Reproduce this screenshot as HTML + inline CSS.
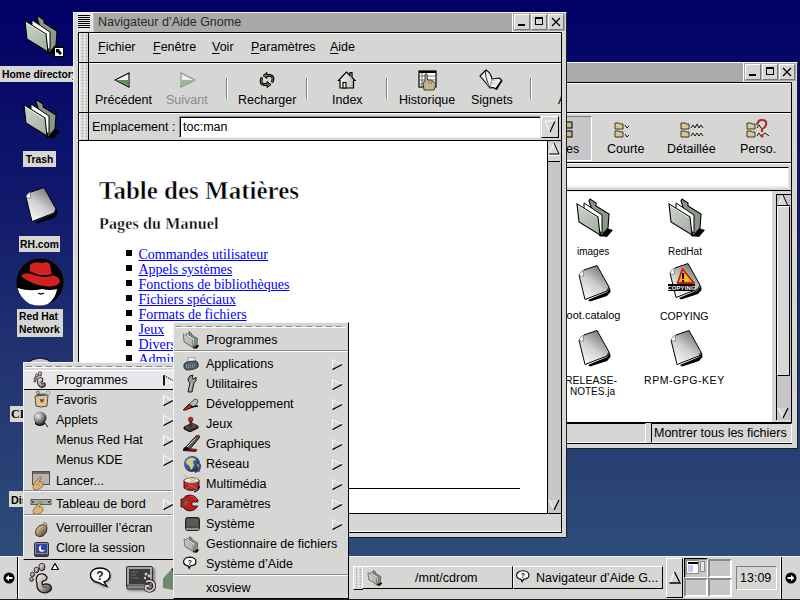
<!DOCTYPE html>
<html><head><meta charset="utf-8">
<style>
*{margin:0;padding:0;box-sizing:border-box}
html,body{width:800px;height:600px;overflow:hidden}
body{position:relative;font-family:"Liberation Sans",sans-serif;font-size:12.5px;color:#000;
background:linear-gradient(to bottom,#010166 0px,#030566 40px,#121a6c 210px,#203170 346px,#283f74 456px,#2c4b78 540px,#2d4e7a 600px)}
.a{position:absolute}
.t{position:absolute;white-space:nowrap;line-height:1}
.g{background:#d6d6d4}
.blk{background:#000}
.hdl{position:absolute;background-color:#e2e2e0;
 background-image:radial-gradient(circle at 1.5px 1.5px,#bcb4b4 0.9px,transparent 1.1px);
 background-size:4px 3px;background-position:1px 1px;border-right:1px solid #000;border-left:1px solid #fff}
.lbl{position:absolute;background:#d6d6d4;font-weight:bold;font-size:12px;line-height:14px;text-align:center;color:#000;white-space:nowrap}
.wbtn{position:absolute;width:16px;height:16px;background:#d6d6d4;border:1px solid;border-color:#fff #7a7a7a #7a7a7a #fff;box-shadow:0 0 0 1px #a8a8a8}
.tb{position:absolute;width:2px;background:#858585;border-right:1px solid #fff}
.mi{position:absolute;left:0;right:0;height:20px}
.mi .t{top:4px}
u{text-underline-offset:2px}
.arr{position:absolute;width:11px;height:11px}
</style></head><body>

<svg width="0" height="0" style="position:absolute">
 <defs>
  <linearGradient id="fgr" x1="0" y1="0" x2="1" y2="1"><stop offset="0" stop-color="#ccd6cc"/><stop offset="1" stop-color="#a0ae9e"/></linearGradient>
  <linearGradient id="dgr" x1="0.75" y1="0.1" x2="0.2" y2="0.95"><stop offset="0" stop-color="#7a7a7a"/><stop offset="0.5" stop-color="#cfcfcf"/><stop offset="1" stop-color="#f8f8f8"/></linearGradient>
  <symbol id="folder" viewBox="0 0 45 45">
   <path d="M27 41L31 32L41 35L35 42Z" fill="#000"/>
   <path d="M17 6L18 4L24 8L24 11L37 19L36 33L29 41Z" fill="#8a988a" stroke="#000" stroke-width="1.1"/>
   <path d="M12 8L30 20L30 38L12 26Z" fill="#fff" stroke="#000" stroke-width="1"/>
   <path d="M5 9L26 22L28 40L7 27Z" fill="url(#fgr)" stroke="#000" stroke-width="1.1"/>
   <path d="M6 10.5L25 22.5" stroke="#eef4ee" stroke-width="1"/>
  </symbol>
  <symbol id="doc" viewBox="0 0 45 45">
   <path d="M16 40L35 32L38 27L38.5 32L35 36L18 41.5Z" fill="#000"/>
   <path d="M7 15L12 10L25 5.5L37 27L35 31L13 39.5Z" fill="url(#dgr)" stroke="#000" stroke-width="1"/>
   <path d="M7 15Q8 11 12 10Q10 13 12 16Q9 17 7 15Z" fill="#fafafa" stroke="#555" stroke-width="0.6"/>
  </symbol>
 </defs>
</svg>
<!-- ============ DESKTOP ICONS ============ -->
<div id="desk">
 <svg class="a" style="left:20px;top:12px" width="45" height="45"><use href="#folder"/></svg>
 <div class="a" style="left:54px;top:47px;width:10px;height:10px;background:#fff;border:1px solid #000"></div>
 <svg class="a" style="left:55px;top:48px" width="8" height="8"><path d="M1 1H5L4 2L7 5L5 7L2 4L1 5Z" fill="#000"/></svg>
 <div class="lbl" style="left:0px;top:66px;width:80px;height:16px;font-size:10.3px;line-height:17px;text-align:left;padding-left:2px">Home directory</div>
 <svg class="a" style="left:19px;top:96px" width="45" height="45"><use href="#folder"/></svg>
 <div class="lbl" style="left:23px;top:151px;width:33px;height:16px;font-size:10.3px;line-height:17px">Trash</div>
 <svg class="a" style="left:19px;top:182px" width="45" height="45"><use href="#doc"/></svg>
 <div class="lbl" style="left:19px;top:236px;width:41px;height:16px;font-size:10.3px;line-height:17px">RH.com</div>
 <svg class="a" style="left:16px;top:258px" width="48" height="48" viewBox="0 0 48 48">
  <circle cx="24" cy="24" r="23.5" fill="#000"/>
  <path d="M1.5 30Q14 34 26 31Q34 33 41 31Q40 40 32 46Q24 49 14 46Q4 40 1.5 30Z" fill="#fff"/>
  <path d="M5 18Q8 14 14 16L14 7Q18 3 26 5Q33 3 34 7L36 17Q44 19 44 24Q40 30 28 28Q14 26 5 18Z" fill="#d42020"/>
  <path d="M14 14Q24 20 36 17" fill="none" stroke="#000" stroke-width="1.8"/>
  <path d="M22 35Q25 37 28 35" fill="none" stroke="#000" stroke-width="1.4"/>
 </svg>
 <div class="lbl" style="left:17px;top:309px;width:46px;height:28px;font-size:10.3px;line-height:12.5px;padding-top:2px;text-align:left;padding-left:2px">Red Hat<br>Network</div>
 <svg class="a" style="left:20px;top:352px" width="40" height="12" viewBox="0 0 40 12"><path d="M6 12Q20 0 34 12Z" fill="#c8c0d8"/><path d="M6 12Q20 0 34 12" fill="none" stroke="#000" stroke-width="1"/></svg>
 <div class="lbl" style="left:10px;top:406px;width:20px;height:16px;font-family:'Liberation Serif',serif;font-size:12px;line-height:17px;text-align:left;padding-left:1px">CD</div>
 <div class="lbl" style="left:9px;top:491px;width:20px;height:16px;font-size:10.8px;line-height:18px;text-align:left;padding-left:2px">Dis</div>
</div>

<!-- ============ GMC WINDOW (right) ============ -->
<div id="gmc">
 <div class="a" style="left:520px;top:62px;width:278px;height:387px;background:#d6d6d4;border-top:1px solid #f4f4f4;border-right:1px solid #202020;border-bottom:1px solid #202020"></div>
 <div class="a" style="left:540px;top:63px;width:203px;height:19px;background:#aaaaa8"></div>
 <div class="a" style="left:743px;top:63px;width:53px;height:19px;background:#dcdcdc;border-left:1px solid #fff"></div>
 <div class="wbtn" style="left:745px;top:64px"></div>
 <div class="a blk" style="left:749px;top:74px;width:7px;height:2px"></div>
 <div class="wbtn" style="left:762px;top:64px"></div>
 <div class="a" style="left:766px;top:67px;width:8px;height:8px;border:1px solid #000;border-top-width:2px"></div>
 <div class="wbtn" style="left:779px;top:64px"></div>
 <svg class="a" style="left:782px;top:67px" width="10" height="10"><path d="M1 1L9 9M9 1L1 9" stroke="#000" stroke-width="1.3"/></svg>
 <!-- inner -->
 <div class="a blk" style="left:530px;top:82px;width:262px;height:109px"></div>
 <div class="a g" style="left:531px;top:83px;width:260px;height:29px;border-top:1px solid #fff"></div>
 <div class="a g" style="left:531px;top:113px;width:260px;height:49px;border-top:1px solid #fff"></div>
 <div class="a" style="left:540px;top:116px;width:52px;height:45px;background:#c8c6c8;border:1px solid;border-color:#7a7a7a #fff #fff #7a7a7a"></div>
 <svg class="a" style="left:566px;top:121px" width="10" height="18"><rect x="0" y="1" width="6" height="6" fill="#c8b888" stroke="#000" stroke-width="1"/><rect x="0" y="10" width="6" height="6" fill="#c8b888" stroke="#000" stroke-width="1"/></svg>
 <div class="t" style="left:566px;top:143px">es</div>
 <svg class="a" style="left:614px;top:121px" width="18" height="18"><path d="M1 2H5L6 3H9V8H1Z" fill="#d8c898" stroke="#302818" stroke-width="0.9"/><path d="M1 10H5L6 11H9V16H1Z" fill="#d8c898" stroke="#302818" stroke-width="0.9"/><path d="M11 4L13 7L15 5M11 13L13 16L15 14" fill="none" stroke="#000" stroke-width="0.9"/></svg>
 <div class="t" style="left:607px;top:143px">Courte</div>
 <svg class="a" style="left:680px;top:120px" width="24" height="19"><path d="M1 3H5L6 4H9V9H1Z" fill="#d8c898" stroke="#302818" stroke-width="0.9"/><path d="M1 11H5L6 12H9V17H1Z" fill="#d8c898" stroke="#302818" stroke-width="0.9"/><path d="M11 8L13 5L15 8L17 4L19 8L21 5L23 8M11 16L13 13L15 16L17 13L19 16L21 13L23 16" fill="none" stroke="#000" stroke-width="0.9"/></svg>
 <div class="t" style="left:667px;top:143px">Détaillée</div>
 <svg class="a" style="left:746px;top:119px" width="26" height="20"><path d="M1 4H5L6 5H9V10H1Z" fill="#d8c898" stroke="#302818" stroke-width="0.9"/><path d="M1 12H5L6 13H9V18H1Z" fill="#d8c898" stroke="#302818" stroke-width="0.9"/><path d="M11 9L13 6L15 9M11 17L13 14L15 17L19 14L23 17" fill="none" stroke="#000" stroke-width="0.9"/><path d="M11 6Q12 1 16 1Q21 1 20 6Q19 9 16 10V13" fill="none" stroke="#b03030" stroke-width="2.2"/><circle cx="16" cy="17" r="1.6" fill="#b03030"/></svg>
 <div class="t" style="left:740px;top:143px">Perso.</div>
 <!-- location -->
 <div class="a g" style="left:531px;top:163px;width:260px;height:27px;border-top:1px solid #fff"></div>
 <div class="a" style="left:560px;top:167px;width:229px;height:21px;background:#fff;border-top:1px solid #000;border-bottom:2px solid #ececec;border-right:1px solid #e8e8e8"></div>
 <!-- content -->
 <div class="a" style="left:531px;top:191px;width:241px;height:231px;background:#fff;border-top:1px solid #f0f0f0"></div>
 <div class="a blk" style="left:530px;top:191px;width:1px;height:232px"></div>
 <div class="a g" style="left:772px;top:191px;width:20px;height:231px;border-right:1px solid #000"></div>
 <div class="a" style="left:776px;top:194px;width:15px;height:226px;background:#c8c6c8;border-left:1px solid #000;border-top:1px solid #000"></div>
 <svg class="a" style="left:777px;top:195px" width="12" height="12"><path d="M6 0L11 11H1Z" fill="#d6d6d4"/><path d="M6 0L1 11" stroke="#fff"/><path d="M6 0L11 11H1" fill="none" stroke="#000" stroke-width="1"/></svg>
 <div class="a blk" style="left:777px;top:205px;width:13px;height:1px"></div>
 <div class="a" style="left:777px;top:206px;width:13px;height:170px;background:#d6d6d4;border-top:1px solid #fff;border-left:1px solid #fff;border-bottom:1px solid #000;border-right:1px solid #000"></div>
 <svg class="a" style="left:777px;top:407px" width="12" height="12"><path d="M1 1H11L6 11Z" fill="#d6d6d4"/><path d="M1 1L6 11" stroke="#fff"/><path d="M11 1L6 11" stroke="#000" stroke-width="1.2"/></svg>
 <div id="files">
 <svg class="a" style="left:572px;top:195px" width="45" height="45"><use href="#folder"/></svg>
 <div class="t" style="left:577px;top:247px;font-size:10px">images</div>
 <svg class="a" style="left:664px;top:195px" width="45" height="45"><use href="#folder"/></svg>
 <div class="t" style="left:668px;top:247px;font-size:10px">RedHat</div>
 <svg class="a" style="left:572px;top:260px" width="45" height="45"><use href="#doc"/></svg>
 <div class="t" style="left:567px;top:310px;font-size:11px;width:60px;overflow:hidden"><span style="margin-left:-6.5px">boot.catalog</span></div>
 <svg class="a" style="left:663px;top:258px" width="45" height="45"><use href="#doc"/>
  <path d="M14.5 25L19.5 11L31 25Z" fill="#f0b820" stroke="#c82010" stroke-width="1.8" stroke-linejoin="round"/>
  <rect x="19" y="15" width="2" height="6" fill="#000"/><rect x="19" y="22" width="2" height="2" fill="#000"/>
  <rect x="5" y="26" width="27" height="7" fill="#000"/>
  <text x="18.5" y="32" font-family="Liberation Sans" font-size="6" font-weight="bold" fill="#fff" text-anchor="middle" letter-spacing="0.1">COPYING</text>
 </svg>
 <div class="t" style="left:660px;top:311px;font-size:10.5px">COPYING</div>
 <svg class="a" style="left:572px;top:325px" width="45" height="45"><use href="#doc"/></svg>
 <div class="t" style="left:565px;top:375px;font-size:10.5px">RELEASE-</div>
 <div class="t" style="left:570px;top:387px;font-size:10px">NOTES.ja</div>
 <svg class="a" style="left:664px;top:325px" width="45" height="45"><use href="#doc"/></svg>
 <div class="t" style="left:644px;top:375px;font-size:10.5px;letter-spacing:0.55px">RPM-GPG-KEY</div>
</div>
 <!-- status -->
 <div class="a blk" style="left:530px;top:422px;width:262px;height:1px"></div>
 <div class="a g" style="left:530px;top:423px;width:262px;height:20px"></div>
 <div class="a" style="left:531px;top:423px;width:115px;height:20px;border:1px solid;border-color:#000 #fff #fff #000"></div>
 <div class="a" style="left:651px;top:423px;width:141px;height:20px;border:1px solid;border-color:#000 #fff #fff #000"></div>
 <div class="t" style="left:654px;top:427px">Montrer tous les fichiers</div>
 <div class="a blk" style="left:530px;top:443px;width:262px;height:1px"></div>
</div>
</div>

<!-- ============ HELP WINDOW ============ -->
<div id="help">
 <!-- frame -->
 <div class="a" style="left:73px;top:12px;width:494px;height:526px;background:#d6d6d4;border-left:1px solid #f4f4f4;border-top:1px solid #f4f4f4;border-right:1px solid #202020;border-bottom:1px solid #202020"></div>
 <!-- title icon -->
 <div class="a" style="left:77px;top:13px;width:17px;height:18px;background:#e8e8e8;border-right:1px solid #c0c0c0"></div>
 <div class="a" style="left:78px;top:15px;width:12px;height:13px;background:repeating-linear-gradient(to bottom,#000 0 1px,transparent 1px 2px)"></div>
 <!-- title bar -->
 <div class="a" style="left:94px;top:13px;width:418px;height:19px;background:#a9a9a7"></div>
 <div class="t" style="left:98px;top:16px;font-size:12.5px;color:#2a2a2a">Navigateur d’Aide Gnome</div>
 <div class="a" style="left:512px;top:13px;width:53px;height:19px;background:#dcdcdc;border-left:1px solid #fff"></div>
 <div class="wbtn" style="left:514px;top:14px"></div>
 <div class="a blk" style="left:518px;top:24px;width:7px;height:2px"></div>
 <div class="wbtn" style="left:531px;top:14px"></div>
 <div class="a" style="left:535px;top:17px;width:8px;height:8px;border:1px solid #000;border-top-width:2px"></div>
 <div class="wbtn" style="left:548px;top:14px"></div>
 <svg class="a" style="left:551px;top:17px" width="10" height="10"><path d="M1 1L9 9M9 1L1 9" stroke="#000" stroke-width="1.3"/></svg>

 <!-- menubar handlebox -->
 <div class="a blk" style="left:78px;top:32px;width:484px;height:109px"></div>
 <div class="a g" style="left:79px;top:33px;width:482px;height:29px;border-top:1px solid #fff"></div>
 <div class="hdl" style="left:79px;top:33px;width:10px;height:29px"></div>
 <div class="t" style="left:98px;top:41px"><u>F</u>ichier</div>
 <div class="t" style="left:153px;top:41px"><u>F</u>enêtre</div>
 <div class="t" style="left:212px;top:41px"><u>V</u>oir</div>
 <div class="t" style="left:251px;top:41px"><u>P</u>aramètres</div>
 <div class="t" style="left:330px;top:41px"><u>A</u>ide</div>

 <!-- toolbar handlebox -->
 <div class="a g" style="left:79px;top:63px;width:482px;height:49px;border-top:1px solid #fff"></div>
 <div class="hdl" style="left:79px;top:63px;width:10px;height:49px"></div>
 <svg class="a" style="left:114px;top:72px" width="17" height="16"><path d="M15 1L1 8L15 15Z" fill="#eef2ee" stroke="#000" stroke-width="1.1"/><path d="M14.5 8L14.5 14.5L2 8Z" fill="#5a945a"/></svg>
 <div class="t" style="left:95px;top:94px">Précédent</div>
 <svg class="a" style="left:180px;top:72px" width="17" height="16"><path d="M1 1L15 8L1 15Z" fill="#eef2ee" stroke="#8a8a8a" stroke-width="1.1"/><path d="M1.5 8L14 8L1.5 14.5Z" fill="#9ab89a"/></svg>
 <div class="t" style="left:166px;top:94px;color:#8a8a8a">Suivant</div>
 <div class="tb" style="left:226px;top:78px;height:21px"></div>
 <svg class="a" style="left:255px;top:68px" width="25" height="24" viewBox="0 0 25 24">
  <path d="M11.5 7.5H15.5Q18 8 18 11L17.5 13.5M12.5 16.5H8.5Q6 16 6 13L6.5 10.5" fill="none" stroke="#000" stroke-width="2.8" stroke-linecap="round"/>
  <path d="M8 7.5L12 4.5V10.5Z M16 16.5L12 13.5V19.5Z" fill="#4a7a4a" stroke="#000" stroke-width="1" stroke-linejoin="round"/>
  <path d="M11.5 7.5H15.5Q18 8 18 11L17.5 13.5M12.5 16.5H8.5Q6 16 6 13L6.5 10.5" fill="none" stroke="#5a8a5a" stroke-width="0.9" stroke-linecap="round"/>
 </svg>
 <div class="t" style="left:238px;top:94px">Recharger</div>
 <div class="tb" style="left:306px;top:78px;height:21px"></div>
 <svg class="a" style="left:334px;top:68px" width="25" height="24" viewBox="0 0 25 24">
  <defs><linearGradient id="hs" x1="0" y1="0" x2="1" y2="0.3"><stop offset="0" stop-color="#ffffff"/><stop offset="1" stop-color="#b8c8b8"/></linearGradient></defs>
  <path d="M4.5 12.5L12.5 4L16 7.5V4.5H18V9.5L21 12.5H19.5V20H6V12.5Z" fill="url(#hs)" stroke="#000" stroke-width="1.2" stroke-linejoin="miter"/>
  <rect x="9" y="14.5" width="3" height="5.5" fill="#e8f0e8" stroke="#000" stroke-width="1.1"/>
 </svg>
 <div class="t" style="left:332px;top:94px">Index</div>
 <div class="tb" style="left:386px;top:78px;height:21px"></div>
 <svg class="a" style="left:418px;top:70px" width="20" height="21" viewBox="0 0 20 21">
  <rect x="1" y="1" width="17" height="16" fill="#fff" stroke="#000" stroke-width="1.2"/>
  <rect x="1" y="1" width="17" height="2" fill="#000"/>
  <path d="M1 6H18M1 10H18M1 14H18M4 3V17" stroke="#505050" stroke-width="0.8"/>
  <path d="M6 20L5 13Q5 11 7 12V5Q7 3 9 4L9.5 10L12 10Q14 10 14 11L16 12Q18 13 17.5 16L16 20Z" fill="#c4b48c" stroke="#3a3020" stroke-width="0.9"/>
  <path d="M11 11V14M13.5 11.5V14" stroke="#6a5a3a" stroke-width="0.6"/>
 </svg>
 <div class="t" style="left:399px;top:94px">Historique</div>
 <svg class="a" style="left:479px;top:69px" width="24" height="22" viewBox="0 0 24 22">
  <path d="M1 7L7 1Q12 4 13 10L20 9Q22 10 23 12L17 20Q14 18 11 19Q7 14 1 7Z" fill="#f0f0f0" stroke="#000" stroke-width="1.1"/>
  <path d="M7 1Q5 6 11 19" fill="none" stroke="#000" stroke-width="0.8"/>
  <path d="M13 10L11 19" stroke="#707070" stroke-width="0.8"/>
  <path d="M3 8Q7 12 10 17" stroke="#b0b0b0" stroke-width="0.8" fill="none"/>
  <path d="M23 12L18 21L16 20L22 11Z" fill="#000"/>
  <path d="M12 12L18 11M12 15L17 14" stroke="#c0c0c0" stroke-width="0.7"/>
 </svg>
 <div class="t" style="left:471px;top:94px">Signets</div>
 <div class="tb" style="left:530px;top:78px;height:21px"></div>
 <div class="a" style="left:550px;top:90px;width:11px;height:16px;overflow:hidden"><div class="t" style="left:8px;top:4px">A</div></div>

 <!-- location handlebox -->
 <div class="a g" style="left:79px;top:113px;width:482px;height:27px;border-top:1px solid #fff"></div>
 <div class="hdl" style="left:79px;top:113px;width:10px;height:27px"></div>
 <div class="t" style="left:92px;top:121px">Emplacement :</div>
 <div class="a" style="left:179px;top:116px;width:362px;height:22px;background:#fff;border-top:1px solid #8a8a8a;border-left:1px solid #8a8a8a;border-right:1px solid #d6d6d4;border-bottom:1px solid #f4f4f4;box-shadow:inset 1px 1px 0 #000"></div>
 <div class="t" style="left:183px;top:121px">toc:man</div>
 <div class="a" style="left:541px;top:116px;width:18px;height:22px;background:#d6d6d4;border:1px solid;border-color:#fff #000 #000 #fff"></div>
 <svg class="a" style="left:544px;top:120px" width="12" height="13"><path d="M1 1H11L6 12Z" fill="#d6d6d4"/><path d="M1 1L6 12" stroke="#fff"/><path d="M11 1L6 12" stroke="#000" stroke-width="1.2"/><path d="M1 1H11" stroke="#fff"/></svg>

 <!-- content -->
 <div class="a" style="left:79px;top:141px;width:468px;height:372px;background:#fff;overflow:hidden">
  <div class="t" style="left:20px;top:37px;font-family:'Liberation Serif',serif;font-weight:bold;font-size:25px;-webkit-text-stroke:0.5px #fff">Table des Matières</div>
  <div class="t" style="left:20px;top:75px;font-family:'Liberation Serif',serif;font-weight:bold;font-size:16px;-webkit-text-stroke:0.35px #fff;letter-spacing:0.15px">Pages du Manuel</div>
  <div class="a blk" style="left:47px;top:109px;width:6px;height:6px"></div>
  <div class="t" style="left:59.5px;top:107px;font-family:'Liberation Serif',serif;font-size:14px;color:#0000ff;text-decoration:underline">Commandes utilisateur</div>
  <div class="a blk" style="left:47px;top:124px;width:6px;height:6px"></div>
  <div class="t" style="left:59.5px;top:122px;font-family:'Liberation Serif',serif;font-size:14px;color:#0000ff;text-decoration:underline">Appels systèmes</div>
  <div class="a blk" style="left:47px;top:139px;width:6px;height:6px"></div>
  <div class="t" style="left:59.5px;top:137px;font-family:'Liberation Serif',serif;font-size:14px;color:#0000ff;text-decoration:underline">Fonctions de bibliothèques</div>
  <div class="a blk" style="left:47px;top:154px;width:6px;height:6px"></div>
  <div class="t" style="left:59.5px;top:152px;font-family:'Liberation Serif',serif;font-size:14px;color:#0000ff;text-decoration:underline">Fichiers spéciaux</div>
  <div class="a blk" style="left:47px;top:169px;width:6px;height:6px"></div>
  <div class="t" style="left:59.5px;top:167px;font-family:'Liberation Serif',serif;font-size:14px;color:#0000ff;text-decoration:underline">Formats de fichiers</div>
  <div class="a blk" style="left:47px;top:184px;width:6px;height:6px"></div>
  <div class="t" style="left:59.5px;top:182px;font-family:'Liberation Serif',serif;font-size:14px;color:#0000ff;text-decoration:underline">Jeux</div>
  <div class="a blk" style="left:47px;top:199px;width:6px;height:6px"></div>
  <div class="t" style="left:59.5px;top:197px;font-family:'Liberation Serif',serif;font-size:14px;color:#0000ff;text-decoration:underline">Divers</div>
  <div class="a blk" style="left:47px;top:214px;width:6px;height:6px"></div>
  <div class="t" style="left:59.5px;top:212px;font-family:'Liberation Serif',serif;font-size:14px;color:#0000ff;text-decoration:underline">Administration système</div>
  <div class="a blk" style="left:0px;top:347px;width:441px;height:1px"></div>
 </div>
 <!-- scrollbar -->
 <div class="a" style="left:547px;top:141px;width:14px;height:372px;background:#c8c6c8;border-left:1px solid #000"></div>
 <div class="a" style="left:548px;top:143px;width:12px;height:12px;background:#d6d6d4"></div>
 <svg class="a" style="left:548px;top:143px" width="12" height="12"><path d="M6 0L11 11H1Z" fill="#d6d6d4"/><path d="M6 0L1 11" stroke="#fff"/><path d="M6 0L11 11H1" fill="none" stroke="#000" stroke-width="1"/></svg>
 <div class="a" style="left:548px;top:155px;width:12px;height:7px;background:#d6d6d4;border-top:1px solid #fff;border-bottom:1px solid #000"></div>
 <svg class="a" style="left:548px;top:499px" width="12" height="12"><path d="M1 1H11L6 11Z" fill="#d6d6d4"/><path d="M1 1L6 11" stroke="#fff"/><path d="M11 1L6 11" stroke="#000" stroke-width="1.2"/></svg>

 <!-- statusbar -->
 <div class="a blk" style="left:78px;top:513px;width:484px;height:1px"></div>
 <div class="a g" style="left:78px;top:514px;width:484px;height:17px;border-left:1px solid #000"></div>
 <div class="a" style="left:78px;top:531px;width:484px;height:1px;background:#fff"></div>
 <div class="a blk" style="left:78px;top:532px;width:484px;height:1px"></div>
 <div class="a blk" style="left:561px;top:32px;width:1px;height:501px"></div>
 <div class="a blk" style="left:78px;top:32px;width:1px;height:501px"></div>
</div>

<!-- ============ PANEL ============ -->
<div id="panel">
 <div class="a" style="left:0;top:556px;width:800px;height:44px;background:#d6d6d4;border-top:1px solid #f0f0f0;border-bottom:1px solid #202020"></div>
 <div class="a blk" style="left:17px;top:557px;width:1px;height:42px"></div>
 <div class="a" style="left:18px;top:557px;width:1px;height:42px;background:#fff"></div>
 <svg class="a" style="left:3px;top:572px" width="12" height="12"><circle cx="6" cy="6" r="5.5" fill="#000"/><path d="M2.5 6L6 3V5H9.5V7H6V9Z" fill="#fff"/></svg>
 <!-- foot -->
 <svg class="a" style="left:27px;top:562px" width="28" height="33" viewBox="0 0 28 33">
  <defs><linearGradient id="ft" x1="0" y1="0" x2="1" y2="1"><stop offset="0" stop-color="#f4f0f0"/><stop offset="0.55" stop-color="#b4a8a8"/><stop offset="1" stop-color="#3a3030"/></linearGradient></defs>
  <ellipse cx="15" cy="5" rx="3" ry="3.8" fill="url(#ft)" stroke="#201a1a" stroke-width="0.9"/>
  <ellipse cx="9.5" cy="8" rx="2.4" ry="2.8" fill="url(#ft)" stroke="#201a1a" stroke-width="0.9"/>
  <ellipse cx="5.5" cy="12.5" rx="2" ry="2.2" fill="url(#ft)" stroke="#201a1a" stroke-width="0.9"/>
  <ellipse cx="4.5" cy="17.5" rx="1.8" ry="1.9" fill="url(#ft)" stroke="#201a1a" stroke-width="0.9"/>
  <path d="M11 13Q17 10 20 15Q20 19 16 19Q14 21 16 23Q19 21 23 23Q26 26 23 29Q19 32 14 30Q9 27 10 21Q8 17 11 13Z" fill="url(#ft)" stroke="#201a1a" stroke-width="1.3"/>
  <path d="M15 24Q17 26 20 25" fill="none" stroke="#403838" stroke-width="1"/>
 </svg>
 <svg class="a" style="left:51px;top:563px" width="8" height="7"><path d="M4 0.5L7.5 6.5H0.5Z" fill="#fff" stroke="#000" stroke-width="1.2"/></svg>
 <!-- help bubble -->
 <svg class="a" style="left:86px;top:564px" width="30" height="28" viewBox="0 0 30 28">
  <defs><filter id="bl" x="-30%" y="-30%" width="160%" height="160%"><feGaussianBlur stdDeviation="1.3"/></filter></defs>
  <path d="M14 6C8 6 5 9 5 12.5C5 16 8 19 12 19.5L20 24L18 19C23 18 25 15 25 12.5C25 9 21 6 14 6Z" fill="#505050" filter="url(#bl)" opacity="0.8"/>
  <path d="M14 4C8 4 4.5 7 4.5 11C4.5 15 8 18 12 18.5L21 22.5L18 18C22 17 24 14 24 11C24 7 20 4 14 4Z" fill="#fff" stroke="#000" stroke-width="1.3"/>
  <text x="14" y="16" font-family="Liberation Sans" font-weight="bold" font-size="12" text-anchor="middle" fill="#202020">?</text>
 </svg>
 <!-- terminal -->
 <svg class="a" style="left:124px;top:564px" width="34" height="30" viewBox="0 0 34 30">
  <rect x="4" y="4" width="27" height="23" fill="#606060" filter="url(#bl)" opacity="0.7"/>
  <rect x="2.5" y="2.5" width="26" height="21" rx="1.5" fill="#a8a4a4" stroke="#303030" stroke-width="1"/>
  <rect x="5" y="5" width="21" height="15" fill="#3c3c3c"/>
  <path d="M7 8H14M7 11H12M7 14H15" stroke="#6a6a6a" stroke-width="1"/>
  <rect x="3" y="21" width="25" height="4" fill="#8a8686" stroke="#303030" stroke-width="0.8"/>
  <circle cx="22" cy="10" r="1.5" fill="#d0c8c8"/><circle cx="25" cy="12" r="1.4" fill="#d0c8c8"/><circle cx="21" cy="14" r="1.2" fill="#d0c8c8"/>
  <path d="M22 18Q27 15 30 20Q31 26 25.5 27Q20 26 22 22L25 22" fill="none" stroke="#302828" stroke-width="3.6"/>
  <path d="M22 18Q27 15 30 20Q31 26 25.5 27Q20 26 22 22L25 22" fill="none" stroke="#d8d0d0" stroke-width="1.8"/>
 </svg>
 <svg class="a" style="left:162px;top:567px" width="12" height="24"><path d="M11 1L3 9L1 12V21L11 23Z" fill="#708a70"/><path d="M9 2L11 1V5Z" fill="#303030"/></svg>
 <!-- taskbar -->
 <div class="hdl" style="left:353px;top:566px;width:10px;height:24px;border-right:1px solid #000;border-left:1px solid #fff;border-top:1px solid #fff;border-bottom:1px solid #000"></div>
 <div class="a" style="left:362px;top:566px;width:151px;height:23px;border:1px solid;border-color:#fff #000 #000 #fff"></div>
 <svg class="a" style="left:365px;top:569px" width="20" height="18" viewBox="0 0 45 45"><use href="#folder"/></svg>
 <div class="t" style="left:415px;top:571.5px">/mnt/cdrom</div>
 <div class="a" style="left:513px;top:566px;width:150px;height:23px;border:1px solid;border-color:#fff #000 #000 #fff"></div>
 <svg class="a" style="left:516px;top:570px" width="16" height="15" viewBox="0 0 26 24"><path d="M11 1C4 1 1 5 1 8.5C1 12 4 14.5 8 15L10 19L12 15C18 15 21 12 21 8.5C21 5 18 1 11 1Z" fill="#fff" stroke="#000" stroke-width="1.8"/><text x="11" y="13" font-family="Liberation Sans" font-weight="bold" font-size="11" text-anchor="middle">?</text></svg>
 <div class="t" style="left:536px;top:571.5px">Navigateur d’Aide G...</div>
 <!-- up arrow -->
 <div class="a" style="left:666px;top:558px;width:17px;height:40px;border:1px solid;border-color:#fff #000 #000 #fff"></div>
 <svg class="a" style="left:668px;top:571px" width="13" height="13"><path d="M6.5 1L1.5 12" stroke="#fff" stroke-width="1.2"/><path d="M6.5 1L12 12H1.5" fill="none" stroke="#000" stroke-width="1.3"/></svg>
 <!-- pager -->
 <div class="a" style="left:683px;top:558px;width:50px;height:40px;background:#d6d6d4"></div>
 <div class="a" style="left:684px;top:558px;width:24px;height:20px;background:#c8c6c8;border:1px solid;border-color:#000 #fff #fff #000;box-shadow:inset 1px 1px 0 #8a8a8a"></div>
 <div class="a" style="left:708px;top:559px;width:24px;height:19px;background:#c8c6c8;border:2px solid;border-color:#8a8a8a #fff #fff #8a8a8a"></div>
 <div class="a" style="left:684px;top:578px;width:24px;height:19px;background:#c8c6c8;border:2px solid;border-color:#8a8a8a #fff #fff #8a8a8a"></div>
 <div class="a" style="left:708px;top:578px;width:24px;height:19px;background:#c8c6c8;border:2px solid;border-color:#8a8a8a #fff #fff #8a8a8a"></div>
 <div class="a" style="left:686px;top:560px;width:13px;height:14px;background:#fff;border:1px solid #8a8a8a"></div>
 <div class="a blk" style="left:688px;top:562px;width:10px;height:2px"></div>
 <div class="a" style="left:688px;top:565px;width:5px;height:7px;background:#c8c8f0"></div>
 <div class="a" style="left:700px;top:561px;width:5px;height:11px;background:#e8e8e8;border:1px solid #8a8a8a"></div>
 <!-- clock -->
 <div class="a" style="left:736px;top:566px;width:41px;height:24px;border:1px solid;border-color:#808080 #fff #fff #808080"></div>
 <div class="t" style="left:740px;top:571.5px">13:09</div>
 <!-- right hide -->
 <div class="a" style="left:780px;top:557px;width:1px;height:42px;background:#fff"></div>
 <div class="a blk" style="left:781px;top:557px;width:1px;height:42px"></div>
 <svg class="a" style="left:785px;top:572px" width="12" height="12"><circle cx="6" cy="6" r="5.5" fill="#000"/><path d="M9.5 6L6 3V5H2.5V7H6V9Z" fill="#fff"/></svg>
</div>

<!-- ============ MENUS ============ -->
<div id="menus">
 <div class="a" style="left:23px;top:362px;width:151px;height:198px;background:#d6d6d4;border-top:1px solid #f4f4f4;border-left:1px solid #f4f4f4;border-bottom:1px solid #000"></div>
 <div class="a" style="left:26px;top:366px;width:146px;height:2px;background:repeating-linear-gradient(to right,#8c8c8c 0 6px,transparent 6px 10px);border-bottom:1px solid #fff"></div>
 <div class="a" style="left:24px;top:370px;width:149px;height:20px;background:#e8e6ea;border-top:1px solid #fff;border-bottom:1px solid #000"></div>
 <div class="t" style="left:56px;top:374.4px">Programmes</div>
 <svg class="a" style="left:163px;top:375px" width="11" height="11"><path d="M1 10.5L10 5.5" stroke="#fff" stroke-width="1"/><path d="M1 0.5V10.5" stroke="#000" stroke-width="1.8"/><path d="M1 0.5L10 5.5" stroke="#000" stroke-width="1.2" stroke-dasharray="1.2 1.2"/></svg>
 <div class="t" style="left:56px;top:394.4px">Favoris</div>
 <svg class="a" style="left:163px;top:395px" width="11" height="11"><path d="M0.5 0.5L10 5.5" stroke="#fff" stroke-width="1"/><path d="M0.5 0.5V10.5" stroke="#fff" stroke-width="1"/><path d="M0.5 10.5L10 5.5" stroke="#000" stroke-width="1.4"/></svg>
 <div class="t" style="left:56px;top:414.4px">Applets</div>
 <svg class="a" style="left:163px;top:415px" width="11" height="11"><path d="M0.5 0.5L10 5.5" stroke="#fff" stroke-width="1"/><path d="M0.5 0.5V10.5" stroke="#fff" stroke-width="1"/><path d="M0.5 10.5L10 5.5" stroke="#000" stroke-width="1.4"/></svg>
 <div class="t" style="left:56px;top:434.4px">Menus Red Hat</div>
 <svg class="a" style="left:163px;top:435px" width="11" height="11"><path d="M0.5 0.5L10 5.5" stroke="#fff" stroke-width="1"/><path d="M0.5 0.5V10.5" stroke="#fff" stroke-width="1"/><path d="M0.5 10.5L10 5.5" stroke="#000" stroke-width="1.4"/></svg>
 <div class="t" style="left:56px;top:454.4px">Menus KDE</div>
 <svg class="a" style="left:163px;top:455px" width="11" height="11"><path d="M0.5 0.5L10 5.5" stroke="#fff" stroke-width="1"/><path d="M0.5 0.5V10.5" stroke="#fff" stroke-width="1"/><path d="M0.5 10.5L10 5.5" stroke="#000" stroke-width="1.4"/></svg>
 <div class="t" style="left:56px;top:475.4px">Lancer...</div>
 <div class="t" style="left:56px;top:498.4px">Tableau de bord</div>
 <svg class="a" style="left:163px;top:499px" width="11" height="11"><path d="M0.5 0.5L10 5.5" stroke="#fff" stroke-width="1"/><path d="M0.5 0.5V10.5" stroke="#fff" stroke-width="1"/><path d="M0.5 10.5L10 5.5" stroke="#000" stroke-width="1.4"/></svg>
 <div class="t" style="left:56px;top:522.4px">Verrouiller l’écran</div>
 <div class="t" style="left:56px;top:542.4px">Clore la session</div>
 <div class="a" style="left:24px;top:490px;width:149px;height:1px;background:#8c8c8c;border-bottom:1px solid #fff;height:2px"></div>
 <div class="a" style="left:24px;top:514px;width:149px;height:1px;background:#8c8c8c;border-bottom:1px solid #fff;height:2px"></div>
 <div class="a" style="left:173px;top:322px;width:176px;height:277px;background:#d6d6d4;border-top:1px solid #f4f4f4;border-left:1px solid #f4f4f4;border-right:1px solid #000;border-bottom:1px solid #000"></div>
 <div class="a" style="left:176px;top:326px;width:170px;height:2px;background:repeating-linear-gradient(to right,#8c8c8c 0 6px,transparent 6px 10px);border-bottom:1px solid #fff"></div>
 <div class="t" style="left:206px;top:333.9px">Programmes</div>
 <div class="a" style="left:174px;top:350px;width:174px;height:2px;background:#8c8c8c;border-bottom:1px solid #fff"></div>
 <div class="t" style="left:206px;top:357.9px">Applications</div>
 <svg class="a" style="left:332px;top:359px" width="11" height="11"><path d="M0.5 0.5L10 5.5" stroke="#fff" stroke-width="1"/><path d="M0.5 0.5V10.5" stroke="#fff" stroke-width="1"/><path d="M0.5 10.5L10 5.5" stroke="#000" stroke-width="1.4"/></svg>
 <div class="t" style="left:206px;top:377.9px">Utilitaires</div>
 <svg class="a" style="left:332px;top:379px" width="11" height="11"><path d="M0.5 0.5L10 5.5" stroke="#fff" stroke-width="1"/><path d="M0.5 0.5V10.5" stroke="#fff" stroke-width="1"/><path d="M0.5 10.5L10 5.5" stroke="#000" stroke-width="1.4"/></svg>
 <div class="t" style="left:206px;top:397.9px">Développement</div>
 <svg class="a" style="left:332px;top:399px" width="11" height="11"><path d="M0.5 0.5L10 5.5" stroke="#fff" stroke-width="1"/><path d="M0.5 0.5V10.5" stroke="#fff" stroke-width="1"/><path d="M0.5 10.5L10 5.5" stroke="#000" stroke-width="1.4"/></svg>
 <div class="t" style="left:206px;top:417.9px">Jeux</div>
 <svg class="a" style="left:332px;top:419px" width="11" height="11"><path d="M0.5 0.5L10 5.5" stroke="#fff" stroke-width="1"/><path d="M0.5 0.5V10.5" stroke="#fff" stroke-width="1"/><path d="M0.5 10.5L10 5.5" stroke="#000" stroke-width="1.4"/></svg>
 <div class="t" style="left:206px;top:437.9px">Graphiques</div>
 <svg class="a" style="left:332px;top:439px" width="11" height="11"><path d="M0.5 0.5L10 5.5" stroke="#fff" stroke-width="1"/><path d="M0.5 0.5V10.5" stroke="#fff" stroke-width="1"/><path d="M0.5 10.5L10 5.5" stroke="#000" stroke-width="1.4"/></svg>
 <div class="t" style="left:206px;top:457.9px">Réseau</div>
 <svg class="a" style="left:332px;top:459px" width="11" height="11"><path d="M0.5 0.5L10 5.5" stroke="#fff" stroke-width="1"/><path d="M0.5 0.5V10.5" stroke="#fff" stroke-width="1"/><path d="M0.5 10.5L10 5.5" stroke="#000" stroke-width="1.4"/></svg>
 <div class="t" style="left:206px;top:477.9px">Multimédia</div>
 <svg class="a" style="left:332px;top:479px" width="11" height="11"><path d="M0.5 0.5L10 5.5" stroke="#fff" stroke-width="1"/><path d="M0.5 0.5V10.5" stroke="#fff" stroke-width="1"/><path d="M0.5 10.5L10 5.5" stroke="#000" stroke-width="1.4"/></svg>
 <div class="t" style="left:206px;top:497.9px">Paramètres</div>
 <svg class="a" style="left:332px;top:499px" width="11" height="11"><path d="M0.5 0.5L10 5.5" stroke="#fff" stroke-width="1"/><path d="M0.5 0.5V10.5" stroke="#fff" stroke-width="1"/><path d="M0.5 10.5L10 5.5" stroke="#000" stroke-width="1.4"/></svg>
 <div class="t" style="left:206px;top:517.9px">Système</div>
 <svg class="a" style="left:332px;top:519px" width="11" height="11"><path d="M0.5 0.5L10 5.5" stroke="#fff" stroke-width="1"/><path d="M0.5 0.5V10.5" stroke="#fff" stroke-width="1"/><path d="M0.5 10.5L10 5.5" stroke="#000" stroke-width="1.4"/></svg>
 <div class="t" style="left:206px;top:537.9px">Gestionnaire de fichiers</div>
 <div class="t" style="left:206px;top:557.9px">Système d’Aide</div>
 <div class="a" style="left:174px;top:574px;width:174px;height:2px;background:#8c8c8c;border-bottom:1px solid #fff"></div>
 <div class="t" style="left:206px;top:581.9px">xosview</div>
 <div id="micons">
 <!-- menu1 -->
 <svg class="a" style="left:33px;top:371px" width="15" height="18" viewBox="0 0 26 32">
  <ellipse cx="12" cy="5" rx="3" ry="4" fill="url(#ft)" stroke="#2a2424" stroke-width="1.2"/>
  <ellipse cx="6.5" cy="8" rx="2.5" ry="3" fill="url(#ft)" stroke="#2a2424" stroke-width="1.2"/>
  <ellipse cx="3.5" cy="13" rx="2" ry="2.4" fill="url(#ft)" stroke="#2a2424" stroke-width="1.2"/>
  <ellipse cx="2.8" cy="18" rx="1.8" ry="2" fill="url(#ft)" stroke="#2a2424" stroke-width="1.2"/>
  <path d="M8 14Q14 9 17 14Q18 19 14 20Q16 23 19 21Q23 22 21 27Q17 31 12 28Q7 24 8 19Q6 16 8 14Z" fill="url(#ft)" stroke="#2a2424" stroke-width="1.8"/>
 </svg>
 <svg class="a" style="left:33px;top:390px" width="18" height="18" viewBox="0 0 18 18">
  <path d="M2 6L15 5L14 16Q8 18 3 16Z" fill="#d8c8a0" stroke="#4a3a2a" stroke-width="0.9"/>
  <path d="M3 6Q5 2 8 4Q10 2 14 5Z" fill="#3a6a9a"/><path d="M3 6Q4 3 7 5Z" fill="#c02020"/><path d="M8 5Q10 3 13 5Z" fill="#2a8a4a"/>
  <circle cx="5" cy="2.5" r="1.6" fill="#c0c0c0" stroke="#404040" stroke-width="0.6"/>
  <circle cx="15" cy="3" r="2" fill="none" stroke="#909090" stroke-width="0.8"/>
  <path d="M9 13Q6 10 7 9Q8 8 9 10Q10 8 11 9Q12 10 9 13Z" fill="#e02020"/>
 </svg>
 <svg class="a" style="left:33px;top:411px" width="16" height="17" viewBox="0 0 16 17">
  <defs><radialGradient id="ball" cx="0.35" cy="0.35" r="0.7"><stop offset="0" stop-color="#f0f0f0"/><stop offset="0.6" stop-color="#808080"/><stop offset="1" stop-color="#202020"/></radialGradient></defs>
  <circle cx="7" cy="7" r="6.5" fill="url(#ball)"/>
  <path d="M2 11Q7 16 12 11L12 13Q7 17 2 13Z" fill="#000"/><path d="M11 11L15 16" stroke="#303030" stroke-width="1.2"/>
 </svg>
 <svg class="a" style="left:31px;top:470px" width="20" height="20" viewBox="0 0 20 20">
  <rect x="1.5" y="1.5" width="17" height="13" fill="#b4b4ac" stroke="#505050"/>
  <rect x="2" y="2" width="16" height="2" fill="#806060"/>
  <path d="M3 20Q1 17 3 14L8 8Q10 6 10.5 7.5L8 12Q11 11 12 13Q13 16 10 18Q7 20 3 20Z" fill="#e0b478" stroke="#6a4010" stroke-width="0.6"/><path d="M5 15Q7 14 9 15" stroke="#8a5a20" stroke-width="0.5" fill="none"/>
 </svg>
 <svg class="a" style="left:30px;top:498px" width="22" height="16" viewBox="0 0 22 16">
  <rect x="1" y="1.5" width="20" height="5" fill="#a0a8a0" stroke="#505050" stroke-width="0.9"/><rect x="2" y="3" width="2" height="2" fill="#505050"/><rect x="18" y="3" width="2" height="2" fill="#505050"/>
  <path d="M4 16Q2 13 4 11L9 5Q11 3 11.5 4.5L9 9Q12 8 13 10Q14 13 11 15Q8 17 4 16Z" fill="#e0b478" stroke="#6a4010" stroke-width="0.6"/>
 </svg>
 <svg class="a" style="left:34px;top:521px" width="15" height="17" viewBox="0 0 15 17">
  <defs><linearGradient id="lk" x1="0" y1="0" x2="1" y2="1"><stop offset="0" stop-color="#e8dcc8"/><stop offset="0.5" stop-color="#a08868"/><stop offset="1" stop-color="#3a2a1a"/></linearGradient></defs>
  <path d="M9 2Q13 1 13 5" fill="none" stroke="#606060" stroke-width="1"/>
  <path d="M2 14Q0 9 5 5Q10 2 13 6Q14 11 9 15Q5 17 2 14Z" fill="url(#lk)" stroke="#2a2010" stroke-width="0.8"/>
 </svg>
 <svg class="a" style="left:34px;top:542px" width="16" height="16" viewBox="0 0 16 16">
  <rect x="0.5" y="0.5" width="14" height="14" rx="1.5" fill="#8a8a8a" stroke="#303030"/>
  <rect x="2" y="2" width="11" height="9" fill="#3040b0"/>
  <circle cx="8" cy="6.5" r="3.2" fill="#fff"/><circle cx="9.6" cy="5.4" r="2.8" fill="#3040b0"/>
  <rect x="1" y="12" width="13" height="2" fill="#404040"/>
 </svg>
 <!-- menu2 -->
 <svg class="a" style="left:181px;top:330px" width="20" height="20" viewBox="0 0 45 45"><use href="#folder"/></svg>
 <svg class="a" style="left:183px;top:357px" width="16" height="14" viewBox="0 0 16 14">
  <rect x="5" y="0.5" width="7" height="5" fill="#f0f0f0" stroke="#808080" stroke-width="0.6"/>
  <path d="M1 7Q3 4 13 4Q16 5 15 10Q12 13 3 13Q0 11 1 7Z" fill="#506070" stroke="#202020" stroke-width="0.8"/>
  <path d="M3 8H12M3 10H11" stroke="#a8b8a0" stroke-width="1" stroke-dasharray="1 1"/>
 </svg>
 <svg class="a" style="left:185px;top:374px" width="13" height="19" viewBox="0 0 13 19">
  <path d="M3 18L5 9Q3 8 3 5Q4 1 8 1L7 4L9 5L11 3Q12 7 9 9L7 18Z" fill="#9a9a9a" stroke="#1a1a1a" stroke-width="1"/>
  <path d="M5 16L6.5 9" stroke="#d8d8d8" stroke-width="0.8"/>
 </svg>
 <svg class="a" style="left:182px;top:398px" width="17" height="13" viewBox="0 0 17 13">
  <path d="M6 7L13 1Q16 1 16 4L12 9Z" fill="#b8b8b8" stroke="#303030" stroke-width="0.8"/>
  <path d="M1 12L7 6L11 9L4 12Z" fill="#c02020" stroke="#200000" stroke-width="0.8"/>
  <path d="M9 9L16 8" stroke="#000" stroke-width="1.5"/>
 </svg>
 <svg class="a" style="left:183px;top:416px" width="16" height="16" viewBox="0 0 16 16">
  <path d="M1 11L9 7L15 10L15 12L7 16L1 13Z" fill="#2a2a2a" stroke="#000" stroke-width="0.8"/>
  <path d="M1 11L9 7L15 10L7 14Z" fill="#484848"/>
  <rect x="6.5" y="4" width="2.4" height="7" fill="#303030"/>
  <circle cx="7.7" cy="3.5" r="2.3" fill="#c82020" stroke="#400000" stroke-width="0.6"/>
  <circle cx="4.5" cy="12" r="0.9" fill="#e02020"/><circle cx="11" cy="11" r="0.9" fill="#e02020"/>
 </svg>
 <svg class="a" style="left:181px;top:434px" width="20" height="19" viewBox="0 0 20 19">
  <path d="M2 17Q2 14 6 14L16 15Q17 18 13 18Z" fill="#7a1a1a"/>
  <path d="M4 14L15 2Q18 0 19 3L8 16Z" fill="#5a5a5a" stroke="#101010" stroke-width="1"/>
  <path d="M6 13L16 3" stroke="#d8d8d8" stroke-width="1"/>
  <path d="M15 2Q18 0 19 3L17 5L13 4Z" fill="#8a3a2a"/>
  <path d="M2 16Q3 12 6 13L8 15Q6 17 2 17Z" fill="#101010"/>
 </svg>
 <svg class="a" style="left:183px;top:455px" width="19" height="19" viewBox="0 0 19 19">
  <defs><radialGradient id="gl" cx="0.35" cy="0.35" r="0.75"><stop offset="0" stop-color="#5a8ad0"/><stop offset="1" stop-color="#102a60"/></radialGradient></defs>
  <path d="M13 4L18 10L17 16L12 18Z" fill="#303030"/>
  <circle cx="9" cy="9" r="8" fill="url(#gl)"/>
  <path d="M3 6Q6 2 10 3L13 4Q12 6 10 6Q9 8 11 10Q10 14 8 15Q7 12 6 10Q3 10 3 6Z" fill="#d8c880"/>
  <path d="M14 6Q16 8 16 11Q15 15 12 17L16 17Q18 13 17 8Z" fill="#505050"/>
  <path d="M14 9L16 10L15 13Z" fill="#c0c0c0"/>
 </svg>
 <svg class="a" style="left:182px;top:473px" width="19" height="20" viewBox="0 0 19 20">
  <path d="M2 7V15Q9 20 17 15V7Z" fill="#b82828" stroke="#200000" stroke-width="0.8"/>
  <path d="M3 9L15 16M15 9L4 16" stroke="#e07060" stroke-width="0.7"/>
  <ellipse cx="9.5" cy="7.5" rx="7.5" ry="2.8" fill="#e8e0e0" stroke="#404040" stroke-width="0.8"/>
  <path d="M1 1L13 9M17 4L7 10" stroke="#d8b880" stroke-width="1.2"/>
  <path d="M17 13Q18 17 12 19" stroke="#000" stroke-width="1.2" fill="none"/>
 </svg>
 <svg class="a" style="left:180px;top:494px" width="19" height="18" viewBox="0 0 19 18">
  <path d="M18 6Q15 1 10 1Q5 1 3 5H1V13H3Q5 17 10 17Q15 17 18 12H12V8H18Z" fill="#b82020" stroke="#300000" stroke-width="0.8"/>
  <path d="M10 2Q14 2 16 5" stroke="#e86060" stroke-width="0.8" fill="none"/>
  <rect x="4" y="7" width="4" height="4" fill="#606060"/>
 </svg>
 <svg class="a" style="left:185px;top:517px" width="15" height="15" viewBox="0 0 15 15">
  <rect x="0.5" y="0.5" width="14" height="13" rx="2" fill="#484848" stroke="#202020"/>
  <rect x="2" y="2" width="11" height="7" fill="#5a5a5a"/>
  <rect x="1" y="11" width="13" height="2" fill="#909090"/>
 </svg>
 <svg class="a" style="left:182px;top:535px" width="19" height="19" viewBox="0 0 45 45"><use href="#folder"/></svg>
 <svg class="a" style="left:183px;top:556px" width="16" height="16" viewBox="0 0 26 24"><path d="M11 1C4 1 1 5 1 8.5C1 12 4 14.5 8 15L10 19L12 15C18 15 21 12 21 8.5C21 5 18 1 11 1Z" fill="#fff" stroke="#000" stroke-width="2"/><text x="11" y="13" font-family="Liberation Sans" font-weight="bold" font-size="11" text-anchor="middle">?</text></svg>
</div>
</div>

</body></html>
